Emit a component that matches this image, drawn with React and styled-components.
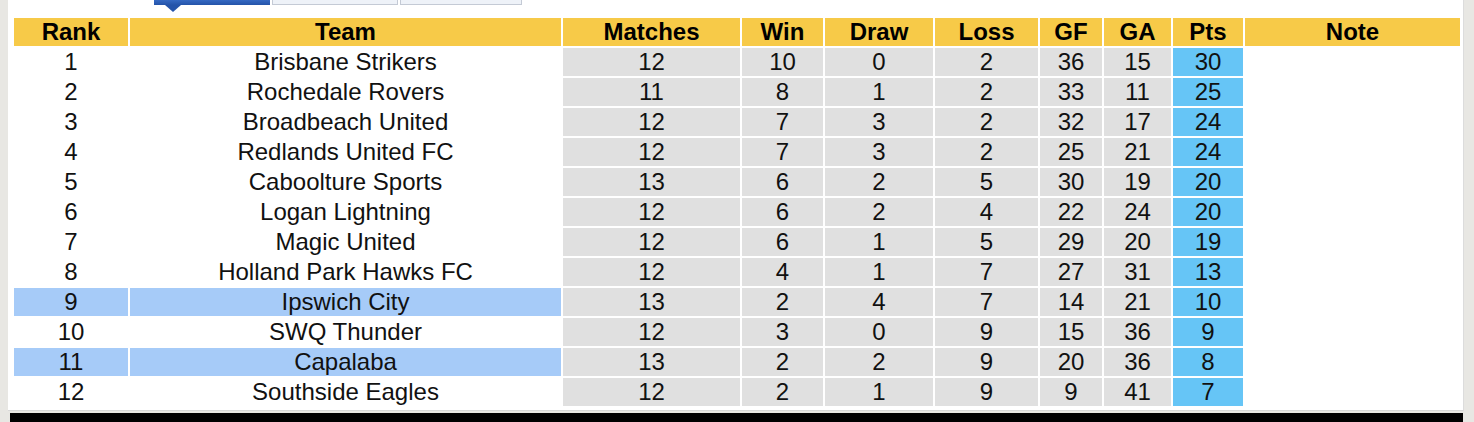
import React from "react";
import styled, { createGlobalStyle } from "styled-components";

const GlobalStyle = createGlobalStyle`
  html, body { margin: 0; padding: 0; background: #e8e7e3; }
  body { font-family: "Liberation Sans", Arial, sans-serif; }
`;

const Page = styled.div`
  width: 1474px;
  height: 422px;
  box-sizing: border-box;
  padding: 0 10px 0 8px;
  background: #e8e7e3;
  display: flex;
  flex-direction: column;
  overflow: hidden;
`;

const Panel = styled.div`
  background: #fff;
  box-sizing: border-box;
  padding: 0 2px 2px 4px;
  border-right: 1px solid #dcdcdc;
  border-bottom: 1px solid #d8d8d8;
`;

const TabBar = styled.div`
  position: relative;
  display: flex;
  gap: 2px;
  height: 5px;
  margin-left: 142px;
  margin-bottom: 11px;
`;

const Tab = styled.div`
  box-sizing: border-box;
  width: ${(p) => p.$w}px;
  height: 5px;
  background: ${(p) => (p.$active ? "linear-gradient(#3569c2, #2453a9)" : "#eef2f8")};
  border: ${(p) => (p.$active ? "none" : "1px solid #c4cad5")};
  border-top: none;
  position: relative;
`;

const Pointer = styled.div`
  position: absolute;
  left: 11px;
  top: 5px;
  width: 0;
  height: 0;
  border-left: 8px solid transparent;
  border-right: 8px solid transparent;
  border-top: 7px solid #2453a9;
`;

const Table = styled.table`
  border-collapse: separate;
  border-spacing: 2px;
  table-layout: fixed;
  width: 1450px;
  font-size: 24px;
  color: #111;
`;

const Th = styled.th`
  background: #f7ca48;
  height: 28px;
  padding: 0;
  font-weight: bold;
  text-align: center;
  line-height: 28px;
  color: #000;
`;

const Td = styled.td`
  height: 28px;
  padding: 0;
  text-align: center;
  line-height: 28px;
  background: ${(p) =>
    p.$kind === "stat"
      ? "#e0e0e0"
      : p.$kind === "pts"
      ? "#66c5f6"
      : p.$hl
      ? "#a6cbf8"
      : "#fff"};
`;

const cols = [114, 431, 177, 81, 108, 103, 62, 67, 70, 215];
const heads = ["Rank", "Team", "Matches", "Win", "Draw", "Loss", "GF", "GA", "Pts", "Note"];

const rows = [
  [1, "Brisbane Strikers", 12, 10, 0, 2, 36, 15, 30],
  [2, "Rochedale Rovers", 11, 8, 1, 2, 33, 11, 25],
  [3, "Broadbeach United", 12, 7, 3, 2, 32, 17, 24],
  [4, "Redlands United FC", 12, 7, 3, 2, 25, 21, 24],
  [5, "Caboolture Sports", 13, 6, 2, 5, 30, 19, 20],
  [6, "Logan Lightning", 12, 6, 2, 4, 22, 24, 20],
  [7, "Magic United", 12, 6, 1, 5, 29, 20, 19],
  [8, "Holland Park Hawks FC", 12, 4, 1, 7, 27, 31, 13],
  [9, "Ipswich City", 13, 2, 4, 7, 14, 21, 10],
  [10, "SWQ Thunder", 12, 3, 0, 9, 15, 36, 9],
  [11, "Capalaba", 13, 2, 2, 9, 20, 36, 8],
  [12, "Southside Eagles", 12, 2, 1, 9, 9, 41, 7],
];

const highlighted = new Set([9, 11]);

const BlackBar = styled.div`
  height: 9px;
  background: #000;
  margin: 2px 0 0 2px;
  width: 1453px;
`;

export default function App() {
  return (
    <>
      <GlobalStyle />
      <Page>
        <Panel>
          <TabBar>
            <Tab $active $w={116}>
              <Pointer />
            </Tab>
            <Tab $w={126} />
            <Tab $w={122} />
          </TabBar>
          <Table>
            <colgroup>
              {cols.map((w, i) => (
                <col key={i} style={{ width: w }} />
              ))}
            </colgroup>
            <thead>
              <tr>
                {heads.map((h) => (
                  <Th key={h}>{h}</Th>
                ))}
              </tr>
            </thead>
            <tbody>
              {rows.map((r) => {
                const hl = highlighted.has(r[0]);
                return (
                  <tr key={r[0]}>
                    <Td $hl={hl}>{r[0]}</Td>
                    <Td $hl={hl}>{r[1]}</Td>
                    <Td $kind="stat">{r[2]}</Td>
                    <Td $kind="stat">{r[3]}</Td>
                    <Td $kind="stat">{r[4]}</Td>
                    <Td $kind="stat">{r[5]}</Td>
                    <Td $kind="stat">{r[6]}</Td>
                    <Td $kind="stat">{r[7]}</Td>
                    <Td $kind="pts">{r[8]}</Td>
                    <Td />
                  </tr>
                );
              })}
            </tbody>
          </Table>
        </Panel>
        <BlackBar />
      </Page>
    </>
  );
}
